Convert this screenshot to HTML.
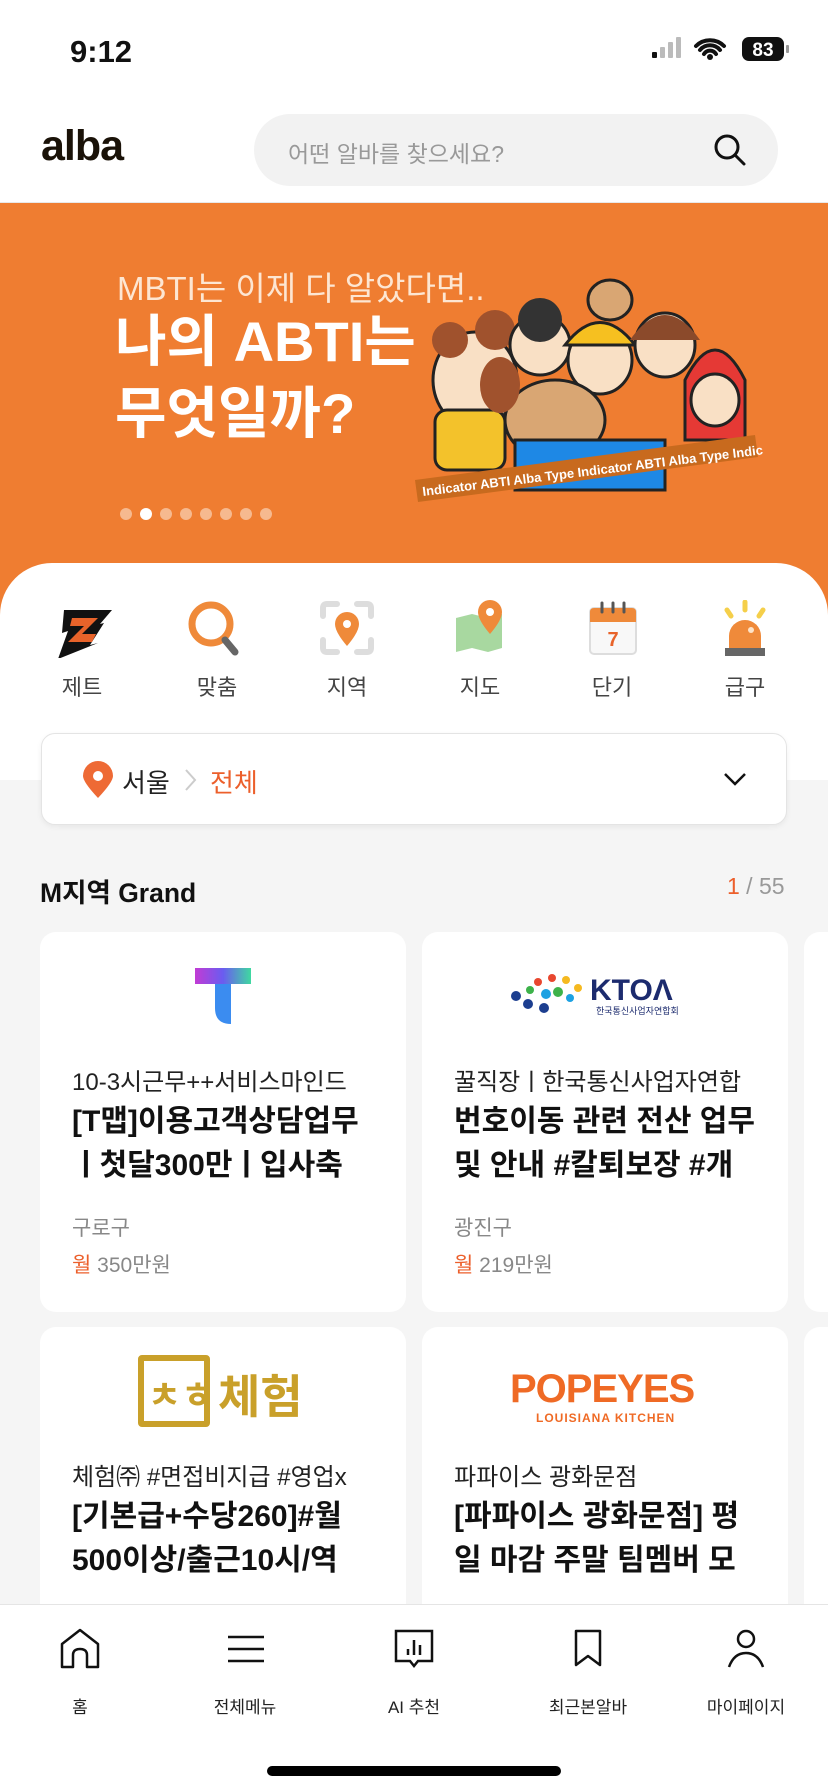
<!DOCTYPE html>
<html><head><meta charset="utf-8"><style>
*{margin:0;padding:0;box-sizing:border-box}
body{width:828px;height:1792px;overflow:hidden;background:#f5f5f5;font-family:"Liberation Sans","Noto Sans CJK KR",sans-serif;position:relative;color:#111}
.abs{position:absolute}
.top{left:0;top:0;width:828px;height:203px;background:#fff;border-bottom:1px solid #e8e8e8}
.banner{left:0;top:203px;width:828px;height:420px;background:#ef7d31}
.white{left:0;top:563px;width:828px;height:217px;background:#fff;border-radius:52px 52px 0 0}
.ico{width:130px;text-align:center;top:600px}
.ico .lb{position:absolute;top:70px;width:130px;font-size:22px;color:#444}
.card{background:#fff;border-radius:16px;width:366px;height:380px}
.sub{font-size:24px;color:#222;left:32px;position:absolute;white-space:nowrap}
.tt{font-size:30px;font-weight:bold;color:#111;left:32px;position:absolute;line-height:44px;width:330px;white-space:nowrap;overflow:hidden}
.loc{font-size:21px;color:#888;left:32px;position:absolute}
.pay{font-size:21px;color:#888;left:32px;position:absolute}
.pay b{color:#ec5f2b;font-weight:normal}
.nav{left:0;top:1604px;width:828px;height:188px;background:#fff;border-top:1px solid #e5e5e5}
.ni{position:absolute;top:22px;width:140px;text-align:center}
.ni .lb{font-size:17px;color:#222;position:absolute;top:66px;width:140px}
</style></head><body>
<div class="abs top"></div>
<div class="abs" style="left:70px;top:34px;font-size:31px;font-weight:bold">9:12</div>
<svg class="abs" style="left:652px;top:36px" width="140" height="28">
<rect x="0" y="16" width="5" height="6" rx="1" fill="#111"/><rect x="8" y="11" width="5" height="11" rx="1" fill="#bbb"/><rect x="16" y="6" width="5" height="16" rx="1" fill="#bbb"/><rect x="24" y="1" width="5" height="21" rx="1" fill="#bbb"/>
<path d="M44 10a20 20 0 0 1 28 0M48 14a13 13 0 0 1 20 0M52 18a7 7 0 0 1 12 0" stroke="#111" stroke-width="4" fill="none" stroke-linecap="round"/><circle cx="58" cy="21" r="3" fill="#111"/>
<rect x="90" y="1" width="42" height="24" rx="7" fill="#111"/><text x="111" y="20" font-size="19" font-weight="bold" fill="#fff" text-anchor="middle" font-family="Liberation Sans">83</text><rect x="134" y="9" width="3" height="8" rx="1" fill="#999"/></svg>
<div class="abs" style="left:41px;top:122px;font-size:43px;font-weight:bold;color:#1a1208;letter-spacing:-1px">alba</div>
<div class="abs" style="left:254px;top:114px;width:524px;height:72px;border-radius:36px;background:#f2f2f2"></div>
<div class="abs" style="left:288px;top:135px;font-size:23px;color:#999">어떤 알바를 찾으세요?</div>
<svg class="abs" style="left:712px;top:132px" width="36" height="36"><circle cx="15" cy="15" r="11" stroke="#111" stroke-width="3" fill="none"/><path d="M23 23l9 9" stroke="#111" stroke-width="3" stroke-linecap="round"/></svg>
<div class="abs banner"></div>
<div class="abs" style="left:117px;top:262px;font-size:33px;color:#fde6d2">MBTI는 이제 다 알았다면..</div>
<div class="abs" style="left:115px;top:306px;font-size:56px;font-weight:bold;color:#fff;line-height:72px">나의 ABTI는<br>무엇일까?</div>
<svg class="abs" style="left:118px;top:506px" width="160" height="16"><g fill="#f6b98f"><circle cx="8" cy="8" r="6"/><circle cx="48" cy="8" r="6"/><circle cx="68" cy="8" r="6"/><circle cx="88" cy="8" r="6"/><circle cx="108" cy="8" r="6"/><circle cx="128" cy="8" r="6"/><circle cx="148" cy="8" r="6"/></g><circle cx="28" cy="8" r="6" fill="#fff"/></svg>
<svg class="abs" style="left:415px;top:270px" width="350" height="250">
<ellipse cx="60" cy="110" rx="42" ry="48" fill="#f9e0c5" stroke="#222" stroke-width="3"/><circle cx="35" cy="70" r="18" fill="#a0522d"/><circle cx="80" cy="60" r="20" fill="#a0522d"/>
<rect x="20" y="140" width="70" height="60" rx="12" fill="#f3c22b" stroke="#222" stroke-width="3"/>
<ellipse cx="125" cy="75" rx="30" ry="30" fill="#f9e0c5" stroke="#222" stroke-width="3"/><circle cx="125" cy="50" r="22" fill="#333"/>
<ellipse cx="185" cy="90" rx="32" ry="34" fill="#f9e0c5" stroke="#222" stroke-width="3"/><path d="M150 75q35-45 70 0z" fill="#f6c020" stroke="#222" stroke-width="3"/>
<ellipse cx="250" cy="75" rx="30" ry="32" fill="#f9e0c5" stroke="#222" stroke-width="3"/><path d="M215 70q35-50 70 0" fill="#8b4a2b"/>
<ellipse cx="195" cy="30" rx="22" ry="20" fill="#d9a673" stroke="#222" stroke-width="3"/>
<path d="M270 110q30-60 60 0v60h-60z" fill="#e53935" stroke="#222" stroke-width="3"/><ellipse cx="300" cy="130" rx="24" ry="26" fill="#f9e0c5" stroke="#222" stroke-width="3"/>
<ellipse cx="140" cy="150" rx="50" ry="40" fill="#d9a673" stroke="#222" stroke-width="3"/><ellipse cx="85" cy="115" rx="20" ry="28" fill="#a0522d"/>
<rect x="100" y="170" width="150" height="50" fill="#1e88e5" stroke="#222" stroke-width="3"/>
<path d="M0 210l340-45 3 22-340 45z" fill="#c86a1e"/><text x="8" y="226" font-size="13" font-weight="bold" fill="#fff" transform="rotate(-7 8 226)" font-family="Liberation Sans">Indicator ABTI Alba Type Indicator ABTI Alba Type Indic</text>
</svg>
<div class="abs white"></div>
<div class="abs" style="left:0;top:780px;width:828px;height:824px;background:#f5f5f5"></div>
<div class="abs ico" style="left:17px"><svg width="60" height="50" style="margin-top:8px"><path d="M12 2h48l-12 14 4-1-14 22 8-2-40 16 10-28-6 2z" fill="#111"/><path d="M20 10h26l-16 16h14l-4 8H16l16-16H18z" fill="#e8632a"/></svg><div class="lb">제트</div></div>
<div class="abs ico" style="left:152px"><svg width="60" height="64"><circle cx="24" cy="24" r="19" stroke="#ef8a3a" stroke-width="7" fill="#fff"/><path d="M38 40l10 12" stroke="#666" stroke-width="7" stroke-linecap="round"/></svg><div class="lb">맞춤</div></div>
<div class="abs ico" style="left:282px"><svg width="56" height="60"><path d="M4 16V8q0-4 4-4h10M38 4h10q4 0 4 4v8M52 40v8q0 4-4 4H38M18 52H8q-4 0-4-4v-8" stroke="#ddd" stroke-width="6" fill="none" stroke-linecap="round"/><path d="M28 46q-12-14-12-22a12 12 0 0 1 24 0q0 8-12 22z" fill="#ef8a3a"/><circle cx="28" cy="24" r="4" fill="#fff"/></svg><div class="lb">지역</div></div>
<div class="abs ico" style="left:415px"><svg width="60" height="64"><path d="M6 18l16-4 16 4 14-4v34l-14 4-16-4-16 4z" fill="#a8d8a0"/><path d="M40 34q-12-14-12-22a12 12 0 0 1 24 0q0 8-12 22z" fill="#ef8a3a"/><circle cx="40" cy="12" r="4" fill="#fff"/></svg><div class="lb">지도</div></div>
<div class="abs ico" style="left:547px"><svg width="56" height="60"><rect x="6" y="8" width="46" height="46" rx="4" fill="#f8f8f8" stroke="#ddd" stroke-width="2"/><path d="M6 12q0-4 4-4h38q4 0 4 4v10H6z" fill="#ef8a3a"/><g stroke="#555" stroke-width="3" stroke-linecap="round"><path d="M18 3v9M29 3v9M40 3v9"/></g><text x="29" y="46" font-size="20" font-weight="bold" fill="#e8632a" text-anchor="middle" font-family="Liberation Sans">7</text></svg><div class="lb">단기</div></div>
<div class="abs ico" style="left:680px"><svg width="56" height="64"><path d="M28 2v8M10 10l4 6M46 10l-4 6" stroke="#f5cf4a" stroke-width="5" stroke-linecap="round"/><path d="M12 48V36a16 16 0 0 1 32 0v12z" fill="#ef8a3a"/><circle cx="34" cy="30" r="3" fill="#fde3c8"/><rect x="8" y="48" width="40" height="8" fill="#666"/></svg><div class="lb">급구</div></div>
<div class="abs" style="left:41px;top:733px;width:746px;height:92px;background:#fff;border:1.5px solid #e4e4e4;border-radius:14px;box-shadow:0 2px 6px rgba(0,0,0,.06)"></div>
<svg class="abs" style="left:81px;top:760px" width="34" height="40"><path d="M17 38Q2 22 2 16a15 15 0 0 1 30 0q0 6-15 22z" fill="#ee6a35"/><circle cx="17" cy="16" r="5" fill="#fff"/></svg>
<div class="abs" style="left:122px;top:763px;font-size:26px;color:#222">서울</div>
<svg class="abs" style="left:182px;top:767px" width="16" height="26"><path d="M4 3l9 10-9 10" stroke="#ccc" stroke-width="2" fill="none"/></svg>
<div class="abs" style="left:210px;top:763px;font-size:26px;color:#ec5f2b">전체</div>
<svg class="abs" style="left:722px;top:770px" width="26" height="18"><path d="M3 4l10 10 10-10" stroke="#111" stroke-width="2.5" fill="none"/></svg>
<div class="abs" style="left:40px;top:871px;font-size:26.5px;font-weight:bold">M지역 Grand</div>
<div class="abs" style="left:727px;top:873px;font-size:23px;color:#999"><span style="color:#ec5f2b">1</span> / 55</div>
<div class="abs card" style="left:40px;top:932px">
<svg class="abs" style="left:155px;top:36px" width="60" height="60"><defs><linearGradient id="tg" x1="0" x2="1"><stop offset="0" stop-color="#c23bd4"/><stop offset=".5" stop-color="#6a5cf0"/><stop offset="1" stop-color="#3fd9a0"/></linearGradient></defs><rect x="0" y="0" width="56" height="16" fill="url(#tg)"/><path d="M20 16h16v40q-16 0-16-16z" fill="#3b8cf0"/></svg>
<div class="sub" style="top:130px">10-3시근무++서비스마인드</div>
<div class="tt" style="top:168px">[T맵]이용고객상담업무<br>ㅣ첫달300만ㅣ입사축</div>
<div class="loc" style="top:280px">구로구</div>
<div class="pay" style="top:317px"><b>월</b> 350만원</div></div>
<div class="abs card" style="left:422px;top:932px">
<svg class="abs" style="left:86px;top:38px" width="200" height="50"><g fill="#1c3e8f"><circle cx="8" cy="26" r="5"/><circle cx="20" cy="34" r="5"/><circle cx="36" cy="38" r="5"/></g><g fill="#e8472f"><circle cx="30" cy="12" r="4"/><circle cx="44" cy="8" r="4"/></g><g fill="#f5b920"><circle cx="58" cy="10" r="4"/><circle cx="70" cy="18" r="4"/></g><g fill="#3db24a"><circle cx="22" cy="20" r="4"/><circle cx="50" cy="22" r="5"/></g><g fill="#1da1e2"><circle cx="38" cy="24" r="5"/><circle cx="62" cy="28" r="4"/></g><text x="82" y="30" font-size="30" font-weight="bold" fill="#1c2b6e" font-family="Liberation Sans">KTOΛ</text><text x="88" y="44" font-size="9" fill="#1c2b6e">한국통신사업자연합회</text></svg>
<div class="sub" style="top:130px">꿀직장ㅣ한국통신사업자연합</div>
<div class="tt" style="top:168px">번호이동 관련 전산 업무<br>및 안내 #칼퇴보장 #개</div>
<div class="loc" style="top:280px">광진구</div>
<div class="pay" style="top:317px"><b>월</b> 219만원</div></div>
<div class="abs card" style="left:804px;top:932px;width:40px"></div>
<div class="abs card" style="left:40px;top:1327px">
<div class="abs" style="left:98px;top:28px;width:72px;height:72px;border:6px solid #c9a02a;border-radius:4px"></div>
<div class="abs" style="left:108px;top:40px;font-size:36px;font-weight:bold;color:#c9a02a">ㅊㅎ</div>
<div class="abs" style="left:178px;top:34px;font-size:46px;font-weight:bold;color:#c9a02a">체험</div>
<div class="sub" style="top:130px">체험㈜ #면접비지급 #영업x</div>
<div class="tt" style="top:168px">[기본급+수당260]#월<br>500이상/출근10시/역</div></div>
<div class="abs card" style="left:422px;top:1327px">
<div class="abs" style="left:88px;top:40px;font-size:40px;font-weight:bold;color:#ef6a25;letter-spacing:-1px">POPEYES</div>
<div class="abs" style="left:114px;top:84px;font-size:12px;font-weight:bold;color:#ef6a25;letter-spacing:1px">LOUISIANA KITCHEN</div>
<div class="sub" style="top:130px">파파이스 광화문점</div>
<div class="tt" style="top:168px">[파파이스 광화문점] 평<br>일 마감 주말 팀멤버 모</div></div>
<div class="abs card" style="left:804px;top:1327px;width:40px"></div>
<div class="abs nav">
<div class="ni" style="left:10px"><svg width="44" height="44"><path d="M4 40V17L22 3l18 14v23h-11V28q0-6-7-6t-7 6v12z" stroke="#111" stroke-width="2.5" fill="none" stroke-linejoin="round"/></svg><div class="lb">홈</div></div>
<div class="ni" style="left:175px"><svg width="44" height="44"><path d="M5 10h36M5 22h36M5 34h36" stroke="#111" stroke-width="2.5"/></svg><div class="lb">전체메뉴</div></div>
<div class="ni" style="left:344px"><svg width="44" height="44"><path d="M4 4h36v30H26l-4 5-4-5H4z" stroke="#111" stroke-width="2.5" fill="none"/><path d="M16 22v6M22 13v15M28 18v10" stroke="#111" stroke-width="2.5"/></svg><div class="lb">AI 추천</div></div>
<div class="ni" style="left:518px"><svg width="44" height="44"><path d="M10 4h24v34l-12-9-12 9z" stroke="#111" stroke-width="2.5" fill="none" stroke-linejoin="round"/></svg><div class="lb">최근본알바</div></div>
<div class="ni" style="left:676px"><svg width="44" height="44"><circle cx="22" cy="12" r="8" stroke="#111" stroke-width="2.5" fill="none"/><path d="M5 40q5-14 17-14t17 14" stroke="#111" stroke-width="2.5" fill="none"/></svg><div class="lb">마이페이지</div></div>
</div>
<div class="abs" style="left:267px;top:1766px;width:294px;height:10px;border-radius:5px;background:#000"></div>
</body></html>
